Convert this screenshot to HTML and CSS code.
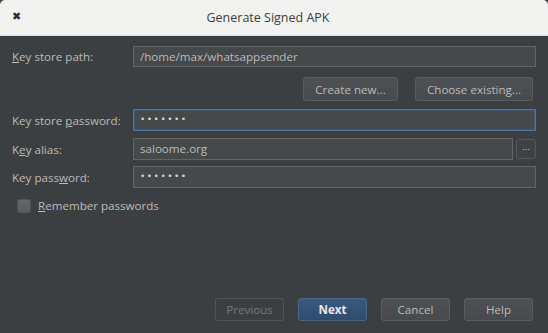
FILE: index.html
```html
<!DOCTYPE html>
<html lang="en">
<head>
    <meta charset="UTF-8">
    <title>Generate Signed APK</title>
    <link rel="stylesheet" href="styles.css">
</head>
<body>
<div class="window">
    <header class="titlebar">
        <span class="close">&#x2716;</span>
        <h1>Generate Signed APK</h1>
    </header>
    <main class="content">
        <div class="row">
            <label><u>K</u>ey store path:</label>
            <div class="field">/home/max/whatsappsender</div>
        </div>
        <div class="store-actions">
            <button class="btn create">Create new...</button>
            <button class="btn choose">Choose existing...</button>
        </div>
        <div class="row row-pass">
            <label>Key store <u>p</u>assword:</label>
            <div class="field focused dots">&bull;&bull;&bull;&bull;&bull;&bull;&bull;</div>
        </div>
        <div class="row row-alias">
            <label>K<u>e</u>y alias:</label>
            <div class="field">saloome.org</div>
            <button class="browse">...</button>
        </div>
        <div class="row row-keypass">
            <label>Key pass<u>w</u>ord:</label>
            <div class="field dots">&bull;&bull;&bull;&bull;&bull;&bull;&bull;</div>
        </div>
        <div class="remember">
            <span class="checkbox"></span>
            <span><u>R</u>emember passwords</span>
        </div>
    </main>
    <footer class="actions">
        <button class="btn disabled">Previous</button>
        <button class="btn primary">Next</button>
        <button class="btn">Cancel</button>
        <button class="btn">Help</button>
    </footer>
</div>
</body>
</html>
```

FILE: styles.css
```css
body {
    margin: 0;
    background: #ffffff;
    font-family: 'Open Sans', 'DejaVu Sans', sans-serif;
    font-size: 11.6px;
    color: #bbbbbb;
}
.window {
    width: 548px;
    height: 333px;
    display: flex;
    flex-direction: column;
    background: #3c3f41;
}
.titlebar {
    height: 36px;
    flex: none;
    display: flex;
    align-items: center;
    position: relative;
    background: #f2f2f1;
    border-radius: 5px 5px 0 0;
    border-bottom: 1px solid #dcdcdc;
    box-sizing: border-box;
}
.close {
    position: absolute;
    left: 12px;
    top: 10px;
    font-size: 11px;
    color: #2e2e2e;
    font-family: 'DejaVu Sans', sans-serif;
}
.titlebar h1 {
    flex: 1;
    margin: 0;
    padding-right: 12px;
    text-align: center;
    font-size: 12.5px;
    font-weight: normal;
    color: #3d3d3d;
}
.content {
    padding: 10px 12px 0 12px;
    display: flex;
    flex-direction: column;
}
.row {
    display: flex;
    align-items: center;
}
.row label {
    width: 121px;
    flex: none;
}
.field {
    flex: 1;
    height: 21px;
    box-sizing: border-box;
    border: 1px solid #646464;
    background: #45494a;
    padding: 0 6px;
    line-height: 19px;
    color: #bbbbbb;
}
.field.focused {
    height: 22px;
    border-color: #4b77a4;
    box-shadow: 0 0 0 1px #3d5a78 inset;
}
.dots {
    letter-spacing: 1.5px;
    font-size: 9px;
    font-family: 'DejaVu Sans', sans-serif;
    color: #d8d8d8;
}
.store-actions {
    display: flex;
    justify-content: flex-end;
    gap: 17px;
    margin: 10px 3px 0 0;
}
.btn {
    height: 24px;
    box-sizing: border-box;
    border: 1px solid #5a5d5f;
    border-radius: 3px;
    background: linear-gradient(#4d5153, #474b4d);
    color: #bbbbbb;
    font-family: inherit;
    font-size: 11.6px;
    padding: 0;
}
.create { width: 95px; }
.choose { width: 118px; }
.row-pass { margin-top: 8px; }
.row-pass .field { height: 22px; }
.row-alias { margin-top: 7px; }
.row-alias .field { height: 22px; }
.browse {
    width: 20px;
    height: 20px;
    margin-left: 3px;
    box-sizing: border-box;
    border: 1px solid #555859;
    border-radius: 3px;
    background: #3f4244;
    color: #cfcfcf;
    font-size: 9px;
    line-height: 10px;
    padding: 0 0 4px 0;
}
.row-keypass { margin-top: 6px; }
.row-keypass .field { height: 22px; }
.remember {
    display: flex;
    align-items: center;
    gap: 7px;
    margin: 10px 0 0 5px;
}
.checkbox {
    width: 14px;
    height: 14px;
    box-sizing: border-box;
    border: 1px solid #505355;
    border-radius: 2px;
    background: linear-gradient(#646769, #5a5d5f);
}
.actions {
    margin-top: auto;
    margin-bottom: 12px;
    display: flex;
    justify-content: flex-end;
    gap: 14px;
    padding-right: 15px;
}
.actions .btn {
    width: 69px;
    height: 23px;
}
.actions .disabled {
    color: #777777;
    background: #3c3f41;
    border-color: #515456;
}
.actions .primary {
    background: linear-gradient(#385a82, #2f4b6d);
    border-color: #4a6584;
    color: #e8e8e8;
    font-weight: bold;
}
```
